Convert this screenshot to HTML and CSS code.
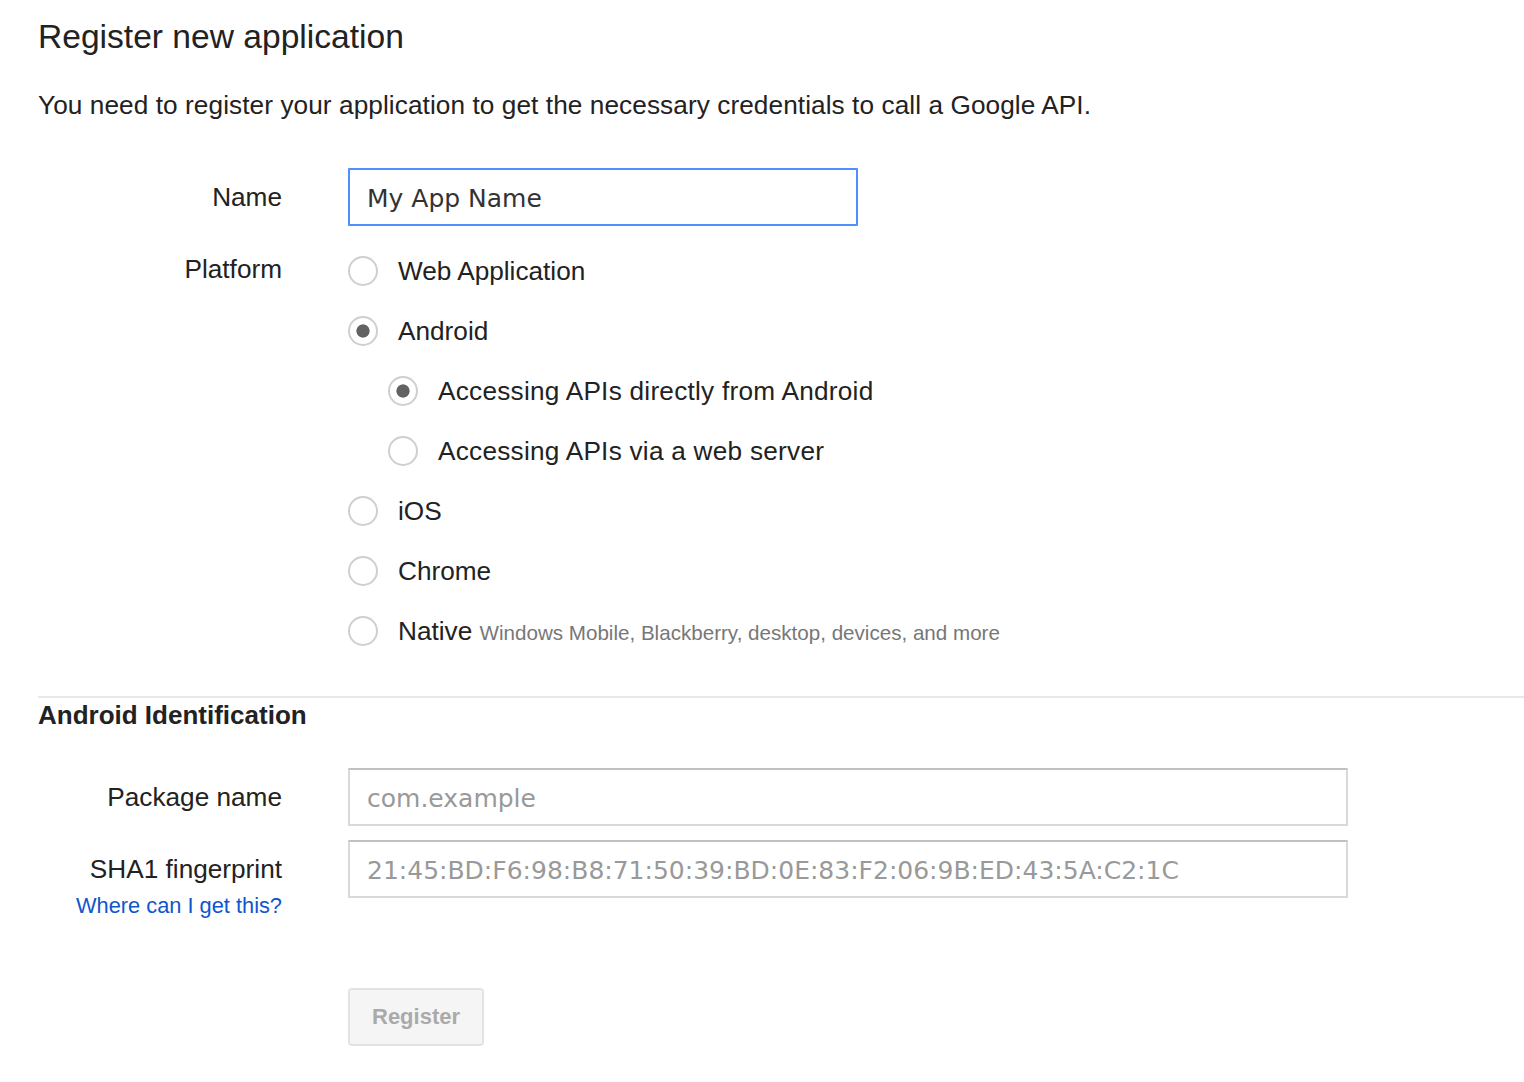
FILE: index.html
```html
<!DOCTYPE html>
<html lang="en">
<head>
<meta charset="utf-8">
<title>Register new application</title>
<link rel="stylesheet" href="styles.css">
</head>
<body>
<div class="page">
  <h1 class="title">Register new application</h1>
  <p class="intro">You need to register your application to get the necessary credentials to call a Google API.</p>

  <div class="row row-name">
    <label class="lbl" for="appname">Name</label>
    <input id="appname" class="field field-focus" type="text" value="My App Name">
  </div>

  <div class="row row-platform">
    <div class="lbl lbl-top">Platform</div>
    <div class="options">
      <label class="opt"><input class="radio" type="radio" name="platform"><span>Web Application</span></label>
      <label class="opt"><input class="radio" type="radio" name="platform" checked><span>Android</span></label>
      <label class="opt opt-sub"><input class="radio" type="radio" name="access" checked><span>Accessing APIs directly from Android</span></label>
      <label class="opt opt-sub"><input class="radio" type="radio" name="access"><span>Accessing APIs via a web server</span></label>
      <label class="opt"><input class="radio" type="radio" name="platform"><span>iOS</span></label>
      <label class="opt"><input class="radio" type="radio" name="platform"><span>Chrome</span></label>
      <label class="opt"><input class="radio" type="radio" name="platform"><span>Native <span class="hint">Windows Mobile, Blackberry, desktop, devices, and more</span></span></label>
    </div>
  </div>

  <hr class="divider">
  <h2 class="section">Android Identification</h2>

  <div class="row row-pkg">
    <label class="lbl" for="pkg">Package name</label>
    <input id="pkg" class="field field-wide" type="text" placeholder="com.example">
  </div>

  <div class="row row-sha">
    <div class="lbl lbl-stack">
      <label for="sha">SHA1 fingerprint</label>
      <a class="help" href="#">Where can I get this?</a>
    </div>
    <input id="sha" class="field field-wide" type="text" placeholder="21:45:BD:F6:98:B8:71:50:39:BD:0E:83:F2:06:9B:ED:43:5A:C2:1C">
  </div>

  <div class="row row-actions">
    <button class="btn" type="button" disabled>Register</button>
  </div>
</div>
</body>
</html>
```

FILE: styles.css
```css
html, body {
  margin: 0;
  padding: 0;
  background: #fff;
}

body {
  font-family: "Liberation Sans", Arial, sans-serif;
  color: #222;
}

.page {
  padding-left: 38px;
}

.title {
  margin: 17px 0 0;
  font-size: 33.6px;
  line-height: 40px;
  font-weight: normal;
  color: #222;
}

.intro {
  margin: 32px 0 0;
  font-size: 26.2px;
  line-height: 32px;
  letter-spacing: 0.08px;
}

.row {
  display: grid;
  grid-template-columns: 244px auto;
  column-gap: 66px;
  justify-content: start;
}

.lbl {
  text-align: right;
  font-size: 26.2px;
  line-height: 32px;
  color: #222;
}

.row-name {
  margin-top: 47px;
  align-items: center;
}

.field {
  box-sizing: border-box;
  height: 58px;
  margin: 0;
  padding: 3px 17px 0;
  border: 2px solid #d9d9d9;
  border-top-color: #c0c0c0;
  border-radius: 1px;
  font-family: "DejaVu Sans", Verdana, sans-serif;
  font-size: 25px;
  color: #333;
  background: #fff;
  outline: none;
}

.field::placeholder {
  color: #999;
}

.field-focus {
  width: 510px;
  border-color: #4d90fe;
}

.field-wide {
  width: 1000px;
}

.row-platform {
  margin-top: 15px;
}

.lbl-top {
  line-height: 56px;
}

.options {
  display: flex;
  flex-direction: column;
}

.opt {
  display: flex;
  align-items: center;
  gap: 20px;
  height: 60px;
  font-size: 26.2px;
  color: #222;
}

.opt-sub {
  padding-left: 40px;
  letter-spacing: 0.25px;
}

.radio {
  appearance: none;
  -webkit-appearance: none;
  flex: none;
  box-sizing: border-box;
  width: 30px;
  height: 30px;
  margin: 0;
  border: 2px solid #cfcfcf;
  border-radius: 50%;
  background: #fff;
}

.radio:checked {
  background: radial-gradient(circle, #626262 0 6.2px, #fff 7px);
}

.hint {
  font-size: 20.6px;
  color: #777;
  letter-spacing: 0;
}

.divider {
  margin: 35px 0 0;
  height: 0;
  border: 0;
  border-top: 2px solid #e8e8e8;
}

.section {
  margin: 0;
  font-size: 26px;
  line-height: 34px;
  font-weight: bold;
  color: #222;
}

.row-pkg {
  margin-top: 36px;
  align-items: center;
}

.row-sha {
  margin-top: 14px;
  align-items: start;
}

.lbl-stack {
  padding-top: 13px;
}

.help {
  display: block;
  margin-top: 7px;
  font-size: 21.8px;
  line-height: 28px;
  color: #15c;
  text-decoration: none;
}

.row-actions {
  margin-top: 68px;
}

.btn {
  grid-column: 2;
  justify-self: start;
  box-sizing: border-box;
  height: 58px;
  padding: 0 22px;
  border: 2px solid #e3e3e3;
  border-radius: 4px;
  background: #f5f5f5;
  font-family: "Liberation Sans", Arial, sans-serif;
  font-size: 22px;
  font-weight: bold;
  color: #aaa;
}
```
